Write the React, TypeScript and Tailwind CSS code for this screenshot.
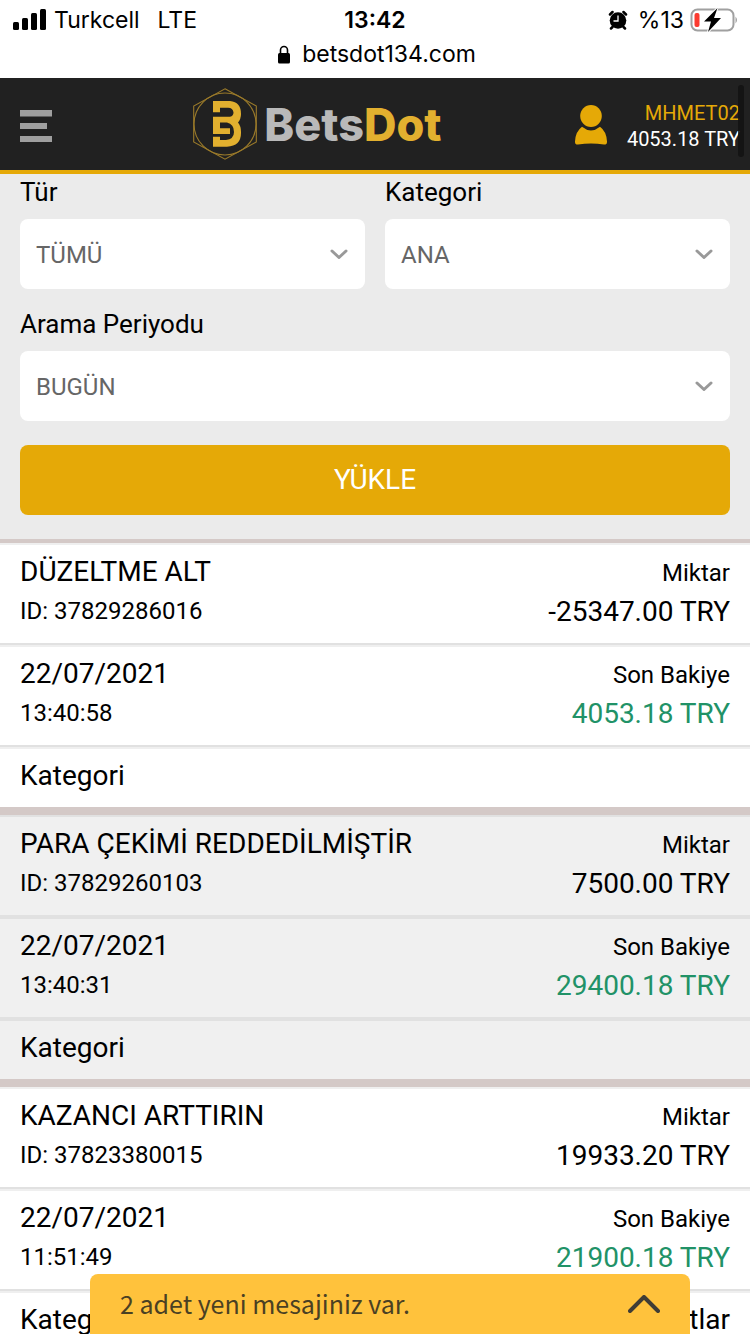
import { useState } from "react";

type Transaction = {
  id: string;
  title: string;
  amount: string;
  date: string;
  time: string;
  balance: string;
  notes?: boolean;
};

const transactions: Transaction[] = [
  {
    id: "37829286016",
    title: "DÜZELTME ALT",
    amount: "-25347.00 TRY",
    date: "22/07/2021",
    time: "13:40:58",
    balance: "4053.18 TRY",
  },
  {
    id: "37829260103",
    title: "PARA ÇEKİMİ REDDEDİLMİŞTİR",
    amount: "7500.00 TRY",
    date: "22/07/2021",
    time: "13:40:31",
    balance: "29400.18 TRY",
  },
  {
    id: "37823380015",
    title: "KAZANCI ARTTIRIN",
    amount: "19933.20 TRY",
    date: "22/07/2021",
    time: "11:51:49",
    balance: "21900.18 TRY",
    notes: true,
  },
];

function StatusBar() {
  return (
    <div className="shrink-0 bg-white pt-1 pb-2 font-['Inter',sans-serif] text-[23px] text-black">
      <div className="grid grid-cols-3 items-center pr-3 pl-3 leading-8">
        <div className="flex items-center gap-2">
          <svg className="h-[22px] w-[34px]" viewBox="0 0 34 22" aria-hidden="true">
            <rect x="1" y="13" width="6" height="8" rx="1.500" />
            <rect x="10" y="9" width="6" height="12" rx="1.500" />
            <rect x="19" y="4" width="6" height="17" rx="1.500" />
            <rect x="28" y="0" width="6" height="21" rx="1.500" />
          </svg>
          <span>Turkcell</span>
          <span className="ml-2.5">LTE</span>
        </div>
        <p className="text-center font-semibold">13:42</p>
        <div className="flex items-center justify-end">
          <svg className="mr-2.5 h-5 w-5" viewBox="0 0 20 20" aria-hidden="true">
            <circle cx="10" cy="10.500" r="8.300" />
            <path
              d="M2 4.500 4.500 2M18 4.500 15.500 2M4.500 17 3 18.500M15.500 17 17 18.500"
              stroke="#000"
              strokeWidth="2.500"
              strokeLinecap="round"
            />
            <path d="M10 5.500V11H5.500" fill="none" stroke="#fff" strokeWidth="1.300" />
          </svg>
          <span className="mr-1.5">%13</span>
          <svg className="h-6 w-[48px]" viewBox="0 0 48 24" aria-hidden="true">
            <rect
              x="1.500"
              y="1.500"
              width="42"
              height="21"
              rx="6"
              fill="none"
              stroke="#a0a0a0"
              strokeWidth="2"
            />
            <path d="M45.500 8.500q3 3.500 0 7z" fill="#a0a0a0" />
            <rect x="4.500" y="5" width="5" height="14" rx="2" fill="#fb3b30" />
            <path
              d="M27.500 0 14 13.500h7L18 24l13-14h-7z"
              stroke="#fff"
              strokeWidth="2"
              paintOrder="stroke"
            />
          </svg>
        </div>
      </div>
      <div className="flex items-center justify-center gap-3 pt-0.5 pl-1 leading-8">
        <svg className="h-[19px] w-3" viewBox="0 0 12 19" aria-hidden="true">
          <path d="M2.500 9V5a3.500 3.500 0 0 1 7 0v4" fill="none" stroke="#000" strokeWidth="1.600" />
          <rect y="8" width="12" height="10.500" rx="1.500" />
        </svg>
        <span>betsdot134.com</span>
      </div>
    </div>
  );
}

function Logo() {
  return (
    <a href="#" aria-label="BetsDot" className="flex items-center gap-[7px]">
      <svg className="h-[72px] w-16" viewBox="0 0 64 72" fill="none" aria-hidden="true">
        <g stroke="#9a7a2a" strokeWidth="1.100">
          <path d="M32 .8 63.300 18v36L32 71.200.7 54V18z" />
          <circle cx="32" cy="36" r="31" />
        </g>
        <path
          d="M20 13h17q11 1 11 13 0 5-3 8.500 3 3.500 3 9.500v1q0 13-14 13.700H20v-10h7V52h6q8-1 8-8 0-8-7-9.500h-7v5.800h10V46H20V28.700h17q3.500-.7 3.500-4.200-.5-4.800-5.500-4.800h-8v4.600h-7z"
          fill="#e2b02f"
        />
      </svg>
      <span className="font-['Inter',sans-serif] text-[45px] leading-none font-extrabold text-[#b9b9b9]">
        Bets<span className="text-[#e2b02f]">Dot</span>
      </span>
    </a>
  );
}

function Header() {
  return (
    <header className="relative flex shrink-0 items-center justify-between border-b-4 border-[#e5a907] bg-[#212121] pr-2.5 pl-5">
      <button type="button" aria-label="Menü" className="w-10 pt-1">
        <svg className="h-8 w-8" viewBox="0 0 32 32" fill="#9f9f9f" aria-hidden="true">
          <rect width="32" height="6.500" />
          <rect y="13" width="27" height="6" />
          <rect y="26" width="32" height="6" />
        </svg>
      </button>
      <div className="py-2.5">
        <Logo />
      </div>
      <a href="#" className="flex items-center gap-5 pt-1">
        <svg className="mb-0.5 h-10 w-8" viewBox="0 0 32 40" fill="#e5a907" aria-hidden="true">
          <ellipse cx="16" cy="11" rx="10.800" ry="11" />
          <path d="M7 21.800q9 7.400 18 0 6.500 4.700 7 14.700.1 3.300-3 3.100Q16 37.600 3 39.600q-3.100.2-3-3.100.5-10 7-14.700z" />
        </svg>
        <span className="flex flex-col text-right text-[20px] leading-[26px] text-white">
          <span className="text-[#e5a907]">MHMET02</span>
          <span>4053.18 TRY</span>
        </span>
      </a>
      <span className="absolute top-[7px] right-1.5 h-[72px] w-1.5 rounded-full bg-[#121212]/85" />
    </header>
  );
}

type SelectFieldProps = {
  id: string;
  label: string;
  options: string[];
};

function SelectField({ id, label, options }: SelectFieldProps) {
  return (
    <div className="flex flex-1 flex-col gap-3">
      <label htmlFor={id} className="text-[26px] leading-[30px]">
        {label}
      </label>
      <div className="relative">
        <select
          id={id}
          className="h-[70px] w-full appearance-none rounded-lg bg-white px-4 pt-0.5 text-[24px] text-[#666]"
        >
          {options.map((option) => (
            <option key={option}>{option}</option>
          ))}
        </select>
        <svg
          className="pointer-events-none absolute top-[30px] right-[17px] h-2.5 w-[18px]"
          viewBox="0 0 18 10"
          fill="none"
          stroke="#999"
          strokeWidth="3"
          strokeLinecap="round"
          strokeLinejoin="round"
          aria-hidden="true"
        >
          <path d="m2 2 7 6.500L16 2" />
        </svg>
      </div>
    </div>
  );
}

function Filters() {
  return (
    <form
      className="flex flex-col gap-5 border-b-4 border-[#d4c9c7] bg-[#ebebeb] px-5 pt-[3px] pb-6"
      onSubmit={(e) => e.preventDefault()}
    >
      <div className="flex gap-5">
        <SelectField id="type" label="Tür" options={["TÜMÜ"]} />
        <SelectField id="category" label="Kategori" options={["ANA"]} />
      </div>
      <SelectField id="period" label="Arama Periyodu" options={["BUGÜN"]} />
      <button
        type="submit"
        className="mt-1 h-[70px] rounded-lg bg-[#e5a907] text-[28px] text-white"
      >
        YÜKLE
      </button>
    </form>
  );
}

function TransactionItem({ item }: { item: Transaction }) {
  return (
    <li className="group border-b-8 border-[#d4c9c7] bg-white text-[28px] leading-10 even:bg-[#f0f0f0]">
      <div className="flex justify-between border-t-2 border-b-2 border-t-[#efefef] border-b-[#e1e1e1] px-5 pt-[7px] pb-3 group-even:border-t-[#e1e1e1]">
        <div>
          <h2>{item.title}</h2>
          <p className="text-[24px] leading-[38px]">ID: {item.id}</p>
        </div>
        <div className="pt-px text-right">
          <p className="text-[24px]">Miktar</p>
          <p className="leading-[38px]">{item.amount}</p>
        </div>
      </div>
      <div className="flex justify-between border-t-2 border-b-2 border-t-[#efefef] border-b-[#e1e1e1] px-5 pt-[7px] pb-3 group-even:border-t-[#e1e1e1]">
        <div>
          <p>{item.date}</p>
          <p className="text-[24px] leading-[38px]">{item.time}</p>
        </div>
        <div className="pt-px text-right">
          <p className="text-[24px]">Son Bakiye</p>
          <p className="leading-[38px] text-[#219267]">{item.balance}</p>
        </div>
      </div>
      <div className="flex justify-between border-t-2 border-[#efefef] px-5 pt-[7px] pb-[11px] group-even:border-[#e1e1e1]">
        <p>Kategori</p>
        {item.notes && <p>Notlar</p>}
      </div>
    </li>
  );
}

function MessageToast() {
  const [open, setOpen] = useState(false);

  return (
    <button
      type="button"
      aria-expanded={open}
      onClick={() => setOpen(!open)}
      className="fixed right-[60px] bottom-0 left-[90px] flex h-[60px] items-center justify-between rounded-t-lg bg-[#ffc23c] px-[30px] font-['Noto_Sans_CJK_SC',sans-serif] text-[25px] text-[#4a4023]"
    >
      <span>2 adet yeni mesajiniz var.</span>
      <svg
        className={`h-[18px] w-8 ${open ? "rotate-180" : ""}`}
        viewBox="0 0 32 18"
        fill="none"
        stroke="#403d35"
        strokeWidth="4"
        strokeLinecap="round"
        strokeLinejoin="round"
        aria-hidden="true"
      >
        <path d="M2 16 16 2l14 14" />
      </svg>
    </button>
  );
}

export default function App() {
  return (
    <div className="flex h-screen flex-col bg-white font-['Roboto',sans-serif] text-black">
      <StatusBar />
      <Header />
      <main className="min-h-0 flex-1 overflow-y-auto [scrollbar-width:none]">
        <Filters />
        <ul>
          {transactions.map((item) => (
            <TransactionItem key={item.id} item={item} />
          ))}
        </ul>
      </main>
      <MessageToast />
    </div>
  );
}
